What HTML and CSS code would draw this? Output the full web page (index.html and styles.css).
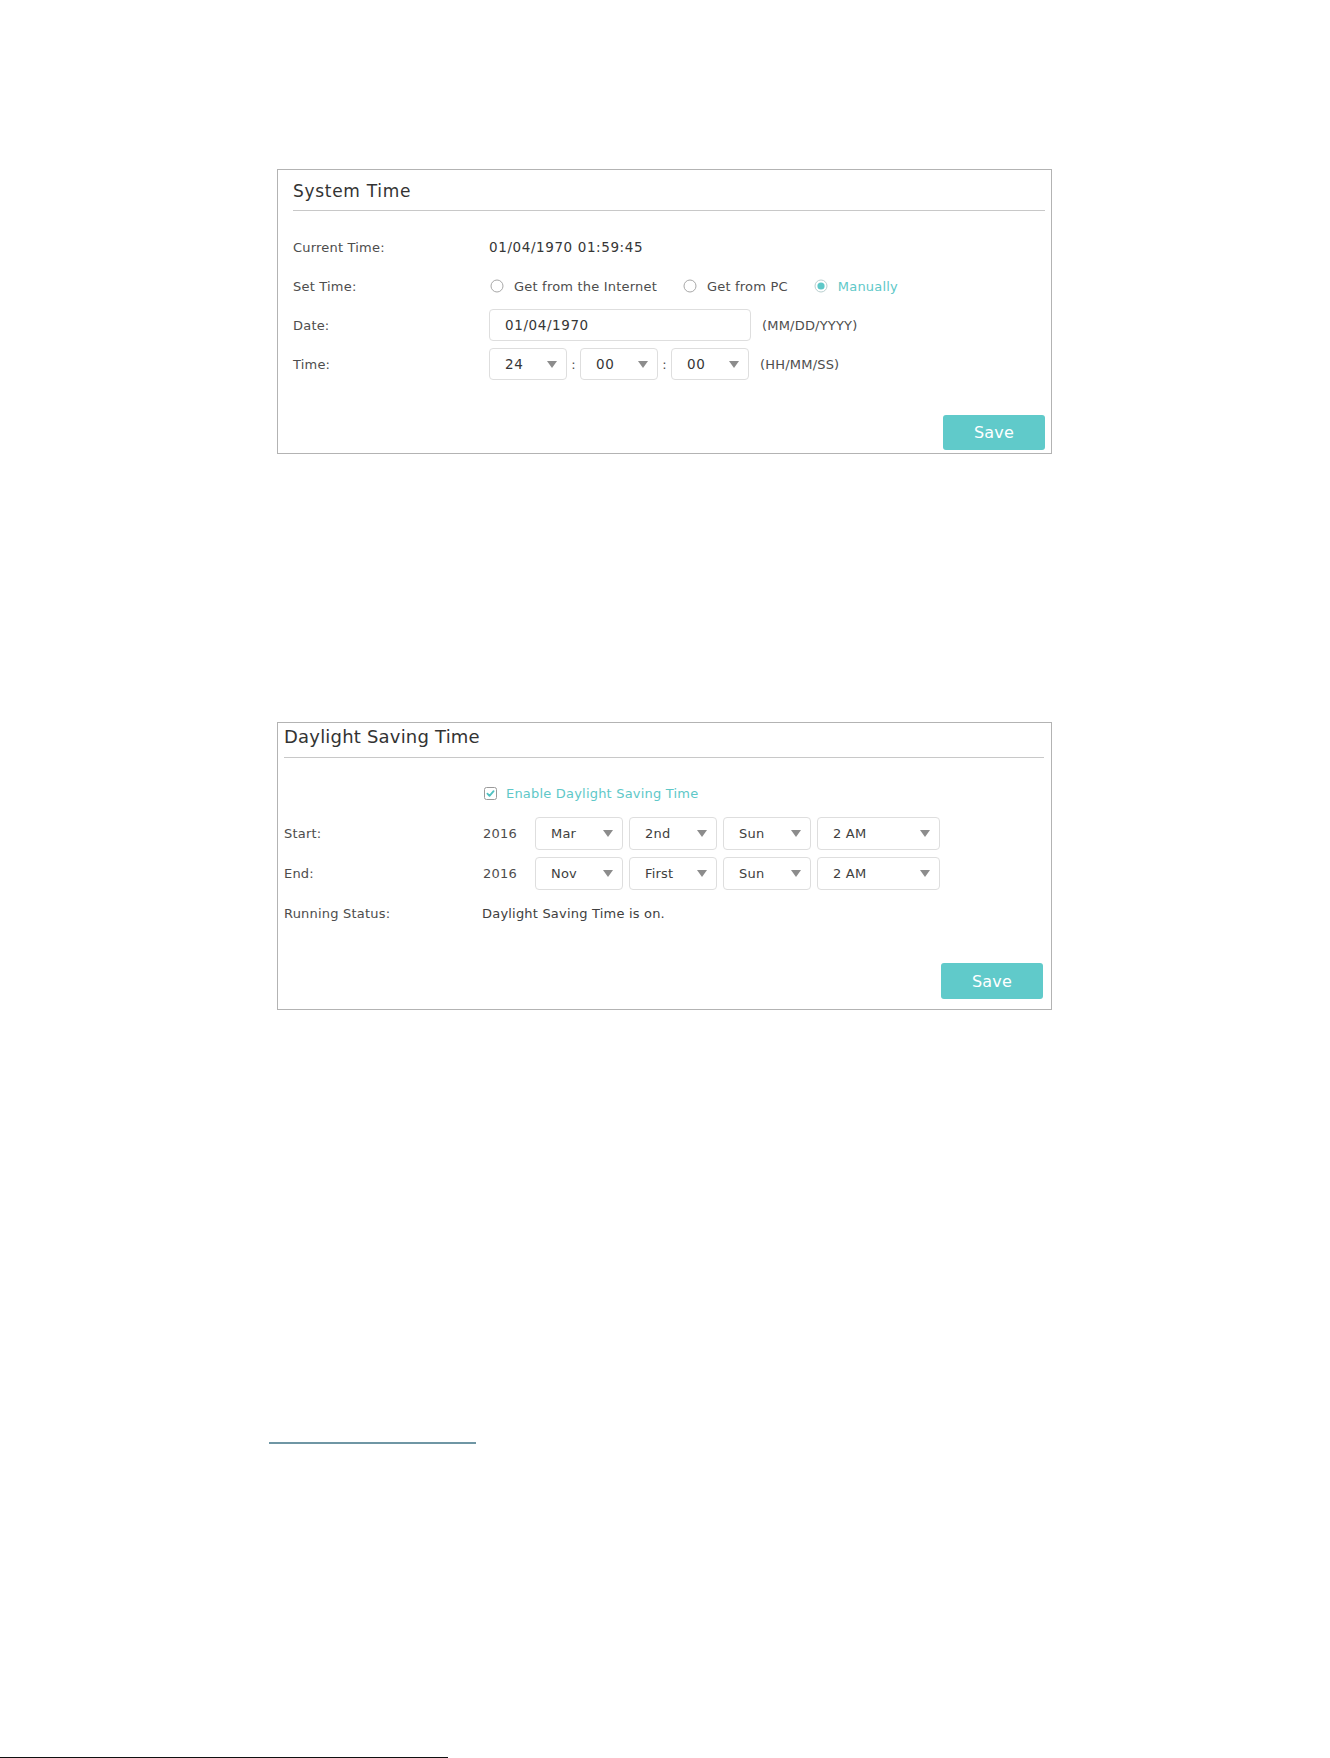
FILE: index.html
```html
<!DOCTYPE html>
<html lang="en">
<head>
<meta charset="utf-8">
<title>Time Settings</title>
<link rel="stylesheet" href="styles.css">
</head>
<body>
<div class="page">

  <section class="panel panel-system">
    <header class="panel-head">
      <h2 class="panel-title title-system">System Time</h2>
    </header>
    <div class="rows rows-system">
      <div class="row">
        <span class="label label-system">Current Time:</span>
        <span class="value value-mono">01/04/1970 01:59:45</span>
      </div>
      <div class="row">
        <span class="label label-system">Set Time:</span>
        <div class="radios">
          <label class="radio">
            <svg class="radio-icon" width="14" height="14" viewBox="0 0 14 14"><circle cx="7" cy="7" r="6" fill="#fff" stroke="#a8a8a8" stroke-width="1"/></svg>
            <span>Get from the Internet</span>
          </label>
          <label class="radio">
            <svg class="radio-icon" width="14" height="14" viewBox="0 0 14 14"><circle cx="7" cy="7" r="6" fill="#fff" stroke="#a8a8a8" stroke-width="1"/></svg>
            <span>Get from PC</span>
          </label>
          <label class="radio radio-on">
            <svg class="radio-icon" width="14" height="14" viewBox="0 0 14 14"><circle cx="7" cy="7" r="6" fill="#fff" stroke="#b9cfcf" stroke-width="1"/><circle cx="7" cy="7" r="3.6" fill="#5ec8c8"/></svg>
            <span>Manually</span>
          </label>
        </div>
      </div>
      <div class="row">
        <span class="label label-system">Date:</span>
        <div class="field field-date"><span class="value-mono">01/04/1970</span></div>
        <span class="unit">(MM/DD/YYYY)</span>
      </div>
      <div class="row">
        <span class="label label-system">Time:</span>
        <div class="select select-time"><span class="value-mono">24</span><i class="caret"></i></div>
        <span class="colon">:</span>
        <div class="select select-time"><span class="value-mono">00</span><i class="caret"></i></div>
        <span class="colon">:</span>
        <div class="select select-time"><span class="value-mono">00</span><i class="caret"></i></div>
        <span class="unit unit-time">(HH/MM/SS)</span>
      </div>
    </div>
    <div class="actions actions-system">
      <button class="btn-save" type="button">Save</button>
    </div>
  </section>

  <section class="panel panel-dst">
    <header class="panel-head head-dst">
      <h2 class="panel-title title-dst">Daylight Saving Time</h2>
    </header>
    <div class="rows rows-dst">
      <div class="row row-dst">
        <span class="label label-dst"></span>
        <label class="check">
          <svg class="check-icon" width="13" height="13" viewBox="0 0 13 13"><rect x="0.5" y="0.5" width="12" height="12" rx="2" fill="#fff" stroke="#9a9a9a"/><path d="M3.4 6.7 L5.5 8.9 L9.6 4.2" fill="none" stroke="#4fc1c1" stroke-width="1.8" stroke-linecap="round" stroke-linejoin="round"/></svg>
          <span>Enable Daylight Saving Time</span>
        </label>
      </div>
      <div class="row row-dst">
        <span class="label label-dst">Start:</span>
        <span class="year">2016</span>
        <div class="selects">
          <div class="select select-dst"><span>Mar</span><i class="caret"></i></div>
          <div class="select select-dst"><span>2nd</span><i class="caret"></i></div>
          <div class="select select-dst"><span>Sun</span><i class="caret"></i></div>
          <div class="select select-dst select-wide"><span>2 AM</span><i class="caret"></i></div>
        </div>
      </div>
      <div class="row row-dst">
        <span class="label label-dst">End:</span>
        <span class="year">2016</span>
        <div class="selects">
          <div class="select select-dst"><span>Nov</span><i class="caret"></i></div>
          <div class="select select-dst"><span>First</span><i class="caret"></i></div>
          <div class="select select-dst"><span>Sun</span><i class="caret"></i></div>
          <div class="select select-dst select-wide"><span>2 AM</span><i class="caret"></i></div>
        </div>
      </div>
      <div class="row row-dst">
        <span class="label label-dst">Running Status:</span>
        <span class="value">Daylight Saving Time is on.</span>
      </div>
    </div>
    <div class="actions actions-dst">
      <button class="btn-save btn-save-dst" type="button">Save</button>
    </div>
  </section>

  <hr class="footnote-rule">

  <div class="page-foot"><span class="page-foot-bar"></span></div>
</div>
</body>
</html>
```

FILE: styles.css
```css
* {
  box-sizing: border-box;
}

html,
body {
  margin: 0;
  padding: 0;
  background: #ffffff;
}

body {
  font-family: "DejaVu Sans", Verdana, sans-serif;
  font-size: 13px;
  letter-spacing: 0.2px;
  color: #4d4d4d;
}

.page {
  padding-top: 169px;
  height: 1758px;
  overflow: hidden;
}

/* ---------- panels ---------- */

.panel {
  width: 775px;
  margin-left: 277px;
  border: 1px solid #b3b3b3;
  background: #fff;
}

.panel-system {
  padding: 0 6px 3px 15px;
}

.panel-dst {
  margin-top: 268px;
  padding: 0 7px 10px 6px;
}

.panel-head {
  padding: 11px 0 9px;
  border-bottom: 1px solid #c8c8c8;
}

.head-dst {
  padding: 3px 0 10px;
}

.panel-title {
  margin: 0;
  font-weight: normal;
  color: #333333;
}

.title-system {
  font-size: 17px;
  line-height: 20px;
  letter-spacing: 0.7px;
}

.title-dst {
  font-size: 18px;
  line-height: 21px;
  letter-spacing: 0.2px;
}

/* ---------- rows ---------- */

.rows {
  display: flex;
  flex-direction: column;
}

.rows-system {
  margin-top: 20px;
  gap: 7px;
}

.rows-dst {
  margin-top: 19px;
  gap: 7px;
}

.row {
  display: flex;
  align-items: center;
  height: 32px;
}

.row-dst {
  height: 33px;
}

.label {
  flex: none;
  color: #4d4d4d;
}

.label-system {
  width: 196px;
}

.label-dst {
  width: 198px;
}

.value {
  color: #404040;
}

.value-mono {
  color: #363636;
  letter-spacing: 0.6px;
  font-size: 13.5px;
}

.unit {
  margin-left: 11px;
  color: #4d4d4d;
}

.unit-time {
  margin-left: 11px;
}

/* ---------- radios / checkbox ---------- */

.radios {
  display: flex;
  align-items: center;
  gap: 26px;
  margin-left: 1px;
}

.radio {
  display: flex;
  align-items: center;
  gap: 10px;
  color: #4d4d4d;
}

.radio-icon {
  display: block;
  flex: none;
}

.radio-on {
  color: #5ec8c8;
}

.check {
  display: flex;
  align-items: center;
  gap: 9px;
  margin-left: 2px;
  color: #5ec8c8;
}

.check-icon {
  display: block;
  flex: none;
}

/* ---------- inputs ---------- */

.field {
  display: flex;
  align-items: center;
  height: 32px;
  border: 1px solid #dedede;
  border-radius: 4px;
  padding-left: 15px;
  background: #fff;
}

.field-date {
  width: 262px;
}

.select {
  display: flex;
  align-items: center;
  justify-content: space-between;
  border: 1px solid #dedede;
  border-radius: 4px;
  background: #fff;
  padding: 0 9px 0 15px;
}

.select-time {
  width: 78px;
  height: 32px;
}

.colon {
  width: 13px;
  text-align: center;
  color: #4d4d4d;
}

.caret {
  display: block;
  width: 0;
  height: 0;
  border-left: 5px solid transparent;
  border-right: 5px solid transparent;
  border-top: 7px solid #8c8c8c;
}

.year {
  width: 52px;
  flex: none;
  color: #4d4d4d;
  margin-left: 1px;
}

.selects {
  display: flex;
  gap: 6px;
}

.select-dst {
  width: 88px;
  height: 33px;
  color: #404040;
}

.select-wide {
  width: 123px;
}

/* ---------- buttons ---------- */

.actions {
  display: flex;
  justify-content: flex-end;
}

.actions-system {
  margin-top: 35px;
}

.actions-dst {
  margin-top: 33px;
  padding-right: 1px;
}

.btn-save {
  width: 102px;
  height: 35px;
  border: none;
  border-radius: 3px;
  background: #60caca;
  color: #ffffff;
  font-family: "DejaVu Sans", Verdana, sans-serif;
  font-size: 16px;
  letter-spacing: 0.2px;
  padding: 0;
}

.btn-save-dst {
  height: 36px;
}

/* ---------- footer ---------- */

.footnote-rule {
  margin: 432px 0 0 269px;
  width: 207px;
  height: 0;
  border: none;
  border-top: 2px solid #6f96a4;
}

.page-foot {
  margin-top: 313px;
  height: 1px;
}

.page-foot-bar {
  display: block;
  width: 448px;
  height: 1px;
  background: #111111;
}
```
